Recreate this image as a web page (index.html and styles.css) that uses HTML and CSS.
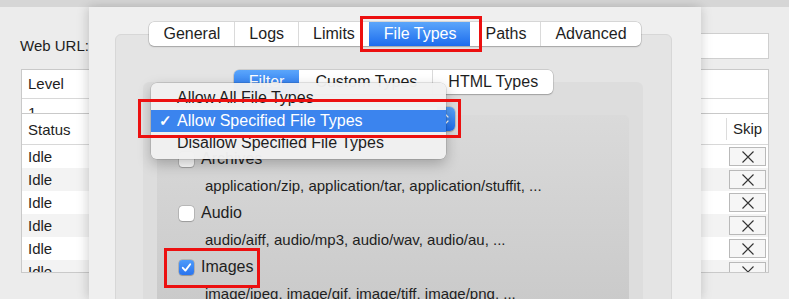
FILE: index.html
```html
<!DOCTYPE html>
<html lang="en">
<head>
  <meta charset="UTF-8" />
  <title>File Types</title>
  <link rel="stylesheet" href="styles.css">
</head>
<body>
  <!-- background window -->
  <div class="window">
    <div class="titlebar"></div>
    <div class="content">
      <div class="url-row">
        <span class="url-label">Web URL:</span>
        <div class="url-field"></div>
      </div>

      <div class="level-table">
        <div class="th">Level</div>
        <div class="td">1</div>
      </div>

      <div class="status-table">
        <div class="status-head">
          <span class="col-status">Status</span>
          <span class="col-skip">Skip</span>
        </div>
        <div class="row"><span class="col-status">Idle</span><span class="skip-btn"><svg viewBox="0 0 14 14"><path d="M1.5 1.5L12.5 12.5M12.5 1.5L1.5 12.5"/></svg></span></div>
        <div class="row"><span class="col-status">Idle</span><span class="skip-btn"><svg viewBox="0 0 14 14"><path d="M1.5 1.5L12.5 12.5M12.5 1.5L1.5 12.5"/></svg></span></div>
        <div class="row"><span class="col-status">Idle</span><span class="skip-btn"><svg viewBox="0 0 14 14"><path d="M1.5 1.5L12.5 12.5M12.5 1.5L1.5 12.5"/></svg></span></div>
        <div class="row"><span class="col-status">Idle</span><span class="skip-btn"><svg viewBox="0 0 14 14"><path d="M1.5 1.5L12.5 12.5M12.5 1.5L1.5 12.5"/></svg></span></div>
        <div class="row"><span class="col-status">Idle</span><span class="skip-btn"><svg viewBox="0 0 14 14"><path d="M1.5 1.5L12.5 12.5M12.5 1.5L1.5 12.5"/></svg></span></div>
        <div class="row"><span class="col-status">Idle</span><span class="skip-btn"><svg viewBox="0 0 14 14"><path d="M1.5 1.5L12.5 12.5M12.5 1.5L1.5 12.5"/></svg></span></div>
      </div>
    </div>
  </div>

  <!-- preferences sheet -->
  <div class="sheet">
    <div class="segmented tabs">
      <span class="seg">General</span>
      <span class="seg">Logs</span>
      <span class="seg">Limits</span>
      <span class="seg selected">File Types</span>
      <span class="seg">Paths</span>
      <span class="seg">Advanced</span>
    </div>

    <div class="tabbox">
      <div class="segmented subtabs">
        <span class="seg selected">Filter</span>
        <span class="seg">Custom Types</span>
        <span class="seg">HTML Types</span>
      </div>

      <div class="filterbox">
        <!-- popup button, its label is hidden under the open menu -->
        <div class="popup">
          <span class="popup-body"></span>
          <span class="popup-cap">
            <svg viewBox="0 0 10 16"><path d="M2 6L5 3L8 6M2 10L5 13L8 10"/></svg>
          </span>
        </div>

        <div class="typebox">
          <div class="type-row">
            <span class="checkbox"></span><span class="type-name">Archives</span>
          </div>
          <div class="type-desc">application/zip, application/tar, application/stuffit, ...</div>

          <div class="type-row">
            <span class="checkbox"></span><span class="type-name">Audio</span>
          </div>
          <div class="type-desc">audio/aiff, audio/mp3, audio/wav, audio/au, ...</div>

          <div class="type-row">
            <span class="checkbox checked"><svg viewBox="0 0 15 15"><path d="M3.8 7.8L6.4 10.6L11.2 4.2"/></svg></span><span class="type-name">Images</span>
          </div>
          <div class="type-desc">image/jpeg, image/gif, image/tiff, image/png, ...</div>
        </div>
      </div>
    </div>
  </div>

  <!-- open popup menu -->
  <div class="menu">
    <div class="menu-item">Allow All File Types</div>
    <div class="menu-item active"><span class="tick">&#10003;</span>Allow Specified File Types</div>
    <div class="menu-item">Disallow Specified File Types</div>
  </div>

  <!-- annotation boxes -->
  <div class="mark mark-tab"></div>
  <div class="mark mark-menu"></div>
  <div class="mark mark-check"></div>
</body>
</html>
```

FILE: styles.css
```css
:root {
  --text: #1e1e1e;
  --blue-top: #5ba6fb;
  --blue-bottom: #1c6ced;
  --highlight: #3b84ee;
  --line: #c9c9c9;
  --mark: #ec1010;
}

body {
  margin: 0;
  width: 789px;
  height: 299px;
  overflow: hidden;
  position: relative;
  background: #ececec;
  font-family: "Liberation Sans", Arial, sans-serif;
  color: var(--text);
}

/* background window */
.titlebar {
  height: 7px;
  background: #d6d6d6;
}

.content {
  padding: 0 20px 0 21px;
}

.url-row {
  display: flex;
  align-items: center;
  gap: 6px;
  margin-top: 26px;
  height: 25px;
}

.url-label {
  font-size: 15px;
  margin-left: -1px;
}

.url-field {
  flex: 1;
  height: 24px;
  background: #fff;
  border: 1px solid #cfcfcf;
}

.level-table {
  margin-top: 11px;
  height: 43px;
  background: #fff;
  border: 1px solid var(--line);
  overflow: hidden;
  font-size: 15px;
}

.level-table .th {
  height: 28px;
  line-height: 28px;
  padding-left: 6px;
  border-bottom: 1px solid #d8d8d8;
}

.level-table .td {
  padding: 5px 0 0 6px;
  line-height: 18px;
}

.status-table {
  height: 158px;
  background: #fff;
  border: 1px solid var(--line);
  border-top: none;
  overflow: hidden;
  font-size: 15px;
}

.status-head {
  display: flex;
  height: 30px;
  align-items: center;
  border-bottom: 1px solid #d8d8d8;
}

.col-status {
  flex: 1;
  padding-left: 6px;
}

.col-skip {
  width: 35px;
  padding-left: 6px;
  line-height: 22px;
  border-left: 1px solid #dcdcdc;
}

.row {
  display: flex;
  align-items: center;
  height: 23px;
}

.row:nth-child(odd) {
  background: #f3f3f3;
}

.skip-btn {
  width: 35px;
  height: 17px;
  margin-right: 2px;
  border: 1px solid #b9b9b9;
  background: #f6f6f6;
  display: flex;
  align-items: center;
  justify-content: center;
}

.skip-btn svg {
  width: 14px;
  height: 14px;
  stroke: #333;
  stroke-width: 1.1;
  fill: none;
}

/* sheet */
.sheet {
  position: absolute;
  left: 89px;
  top: 7px;
  width: 612px;
  height: 292px;
  background: #efefef;
  box-shadow: -3px 0 10px rgba(0, 0, 0, 0.12), 3px 0 10px rgba(0, 0, 0, 0.08);
  padding-top: 15px;
  box-sizing: border-box;
  overflow: hidden;
}

.segmented {
  display: flex;
  width: max-content;
  height: 24px;
  margin: 0 auto;
  background: #fff;
  border-radius: 5px;
  box-shadow: 0 0 0 0.5px rgba(0, 0, 0, 0.2), 0 1px 1.5px rgba(0, 0, 0, 0.2);
  position: relative;
  z-index: 1;
  font-size: 16px;
  overflow: hidden;
}

.seg {
  padding: 0 14px;
  line-height: 24px;
  border-left: 1px solid #dadada;
}

.seg:first-child {
  border-left: none;
}

.subtabs .seg {
  padding: 0 15px;
}

.seg.selected {
  color: #fff;
  background: linear-gradient(var(--blue-top), var(--blue-bottom));
  border-left-color: transparent;
}

.seg.selected + .seg {
  border-left-color: transparent;
}

.tabbox {
  margin: -12px 29px 0 26px;
  height: 300px;
  background: #e4e4e4;
  border: 1px solid #d7d7d7;
  border-radius: 6px;
  padding-top: 35px;
  box-sizing: border-box;
}

.filterbox {
  margin: -12px 0 0 27px;
  width: 500px;
  height: 300px;
  background: #dddddd;
  border-radius: 6px;
  padding-top: 25px;
  box-sizing: border-box;
}

.popup {
  position: relative;
  z-index: 1;
  display: flex;
  height: 24px;
  width: 285px;
  margin-left: 27px;
  background: #fff;
  border-radius: 5px;
  box-shadow: 0 0 0 0.5px rgba(0, 0, 0, 0.2), 0 1px 1.5px rgba(0, 0, 0, 0.2);
  overflow: hidden;
}

.popup-body {
  flex: 1;
}

.popup-cap {
  width: 18px;
  background: linear-gradient(var(--blue-top), var(--blue-bottom));
  display: flex;
  align-items: center;
  justify-content: center;
}

.popup-cap svg {
  width: 8px;
  height: 14px;
  stroke: #fff;
  stroke-width: 1.6;
  fill: none;
}

.typebox {
  margin: -16px 0 0 14px;
  width: 472px;
  height: 200px;
  background: linear-gradient(#dadada, #c9c9c9);
  border-radius: 5px;
  padding: 33px 0 0 22px;
  box-sizing: border-box;
}

.type-row {
  display: flex;
  align-items: center;
  gap: 7px;
  height: 22px;
  font-size: 16px;
}

.checkbox {
  width: 15px;
  height: 15px;
  box-sizing: border-box;
  background: #fff;
  border-radius: 3.5px;
  box-shadow: 0 0 0 0.5px rgba(0, 0, 0, 0.25), 0 1px 1px rgba(0, 0, 0, 0.15);
}

.checkbox.checked {
  background: linear-gradient(#4d9bfa, #2a74ef);
}

.checkbox svg {
  width: 15px;
  height: 15px;
  stroke: #fff;
  stroke-width: 1.9;
  fill: none;
  stroke-linecap: round;
  stroke-linejoin: round;
  display: block;
}

.type-desc {
  margin: 6px 0 6px 26px;
  line-height: 20px;
  font-size: 15px;
}

/* popup menu */
.menu {
  position: absolute;
  left: 151px;
  top: 83px;
  width: 295px;
  padding: 4px 0;
  background: rgba(241, 241, 241, 0.97);
  border-radius: 6px;
  box-shadow: 0 0 0 0.5px rgba(0, 0, 0, 0.18), 0 5px 14px rgba(0, 0, 0, 0.25);
  font-size: 16px;
  z-index: 2;
}

.menu-item {
  position: relative;
  height: 22.5px;
  line-height: 22.5px;
  padding-left: 26px;
}

.menu-item.active {
  background: var(--highlight);
  color: #fff;
}

.tick {
  position: absolute;
  left: 8px;
  font-size: 15px;
  font-weight: bold;
}

/* annotations */
.mark {
  position: absolute;
  border: 3px solid var(--mark);
  box-sizing: border-box;
  z-index: 3;
}

.mark-tab {
  left: 360px;
  top: 16px;
  width: 122px;
  height: 36px;
}

.mark-menu {
  left: 138px;
  top: 99px;
  width: 323px;
  height: 39px;
}

.mark-check {
  left: 164px;
  top: 248px;
  width: 96px;
  height: 40px;
}
```
